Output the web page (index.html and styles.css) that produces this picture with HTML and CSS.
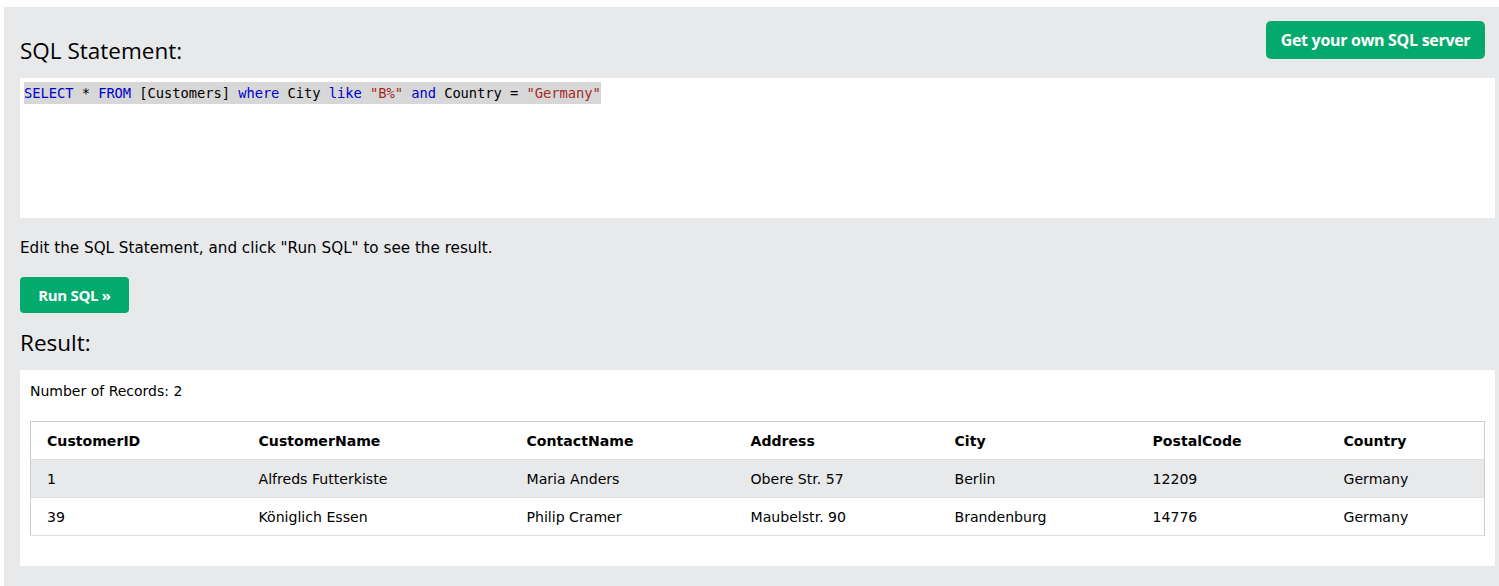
FILE: index.html
```html
<!DOCTYPE html>
<html>
<head>
<meta charset="utf-8">
<link rel="stylesheet" href="styles.css">
</head>
<body>
<div class="page">
  <div class="panel">
    <div class="top-row">
      <h2 class="heading">SQL Statement:</h2>
      <a class="btn-server" href="#">Get your own SQL server</a>
    </div>
    <div class="code-box">
      <span class="code"><span class="kw">SELECT</span> * <span class="kw">FROM</span> [Customers] <span class="kw">where</span> City <span class="kw">like</span> <span class="str">"B%"</span> <span class="kw">and</span> Country = <span class="str">"Germany"</span></span>
    </div>
    <p class="hint">Edit the SQL Statement, and click "Run SQL" to see the result.</p>
    <button class="btn-run">Run SQL »</button>
    <h2 class="heading result-heading">Result:</h2>
    <div class="result-box">
      <div class="count">Number of Records: 2</div>
      <table class="data">
        <colgroup>
          <col class="c1"><col class="c2"><col class="c3"><col class="c4"><col class="c5"><col class="c6"><col class="c7">
        </colgroup>
        <tr><th>CustomerID</th><th>CustomerName</th><th>ContactName</th><th>Address</th><th>City</th><th>PostalCode</th><th>Country</th></tr>
        <tr class="odd"><td>1</td><td>Alfreds Futterkiste</td><td>Maria Anders</td><td>Obere Str. 57</td><td>Berlin</td><td>12209</td><td>Germany</td></tr>
        <tr><td>39</td><td>Königlich Essen</td><td>Philip Cramer</td><td>Maubelstr. 90</td><td>Brandenburg</td><td>14776</td><td>Germany</td></tr>
      </table>
    </div>
  </div>
</div>
</body>
</html>
```
FILE: styles.css
```css
html, body {
  margin: 0;
  padding: 0;
  background: #ffffff;
  overflow: hidden;
}
.page {
  padding: 7px 0 0 4px;
}
.panel {
  background: #e7e9eb;
  padding: 14px 4px 30px 16px;
  min-height: 600px;
  font-family: "DejaVu Sans", Verdana, sans-serif;
  color: #000;
}
.top-row {
  display: flex;
  justify-content: space-between;
  align-items: flex-start;
  height: 57px;
  padding-right: 10px;
}
.heading {
  margin: 0;
  font-family: "Open Sans", "Noto Sans", sans-serif;
  font-weight: 400;
  font-size: 22.5px;
  line-height: 30px;
  padding-top: 15px;
}
.btn-server {
  display: inline-block;
  background: #04aa6d;
  color: #fff;
  text-decoration: none;
  font-family: "Open Sans", sans-serif;
  font-weight: 700;
  font-size: 16px;
  letter-spacing: -0.3px;
  line-height: 38px;
  height: 38px;
  width: 219px;
  text-align: center;
  border-radius: 5px;
}
.code-box {
  background: #fff;
  height: 140px;
  padding: 4px 4px 0 4px;
  box-sizing: border-box;
}
.code {
  display: inline-block;
  background: #d7d7d7;
  font-family: "DejaVu Sans Mono", "Liberation Mono", monospace;
  font-size: 13.8px;
  letter-spacing: -0.07px;
  line-height: 22px;
  height: 22px;
  color: #000;
  white-space: pre;
}
.kw { color: #0000cd; }
.str { color: #a52a2a; }
.hint {
  margin: 0;
  font-size: 15.2px;
  line-height: 20px;
  padding-top: 20px;
  height: 20px;
}
.btn-run {
  display: block;
  margin-top: 19px;
  background: #04aa6d;
  color: #fff;
  border: none;
  border-radius: 4px;
  width: 109px;
  height: 36px;
  font-family: "Open Sans", sans-serif;
  font-weight: 700;
  font-size: 15px;
  letter-spacing: -0.3px;
  padding: 0;
}
.result-heading {
  padding-top: 15px;
  line-height: 30px;
  height: 30px;
}
.result-box {
  margin-top: 12px;
  background: #fff;
  padding: 10px 10px 30px 10px;
}
.count {
  font-size: 14px;
  line-height: 22px;
  height: 22px;
  margin-bottom: 19px;
}
.data {
  width: 100%;
  border-collapse: collapse;
  border: 1px solid #cccccc;
  font-size: 14.1px;
  table-layout: fixed;
}
.data th, .data td {
  text-align: left;
  padding: 9px 8px 7px 8px;
  height: 21px;
  line-height: 21px;
  border-bottom: 1px solid #dddddd;
}
.data th:first-child, .data td:first-child {
  padding-left: 16px;
}
.data th { font-weight: 700; }
.data tr.odd { background: #e7e9eb; }
.c1 { width: 220px; }
.c2 { width: 268px; }
.c3 { width: 224px; }
.c4 { width: 204px; }
.c5 { width: 198px; }
.c6 { width: 191px; }
.c7 { width: auto; }
```
